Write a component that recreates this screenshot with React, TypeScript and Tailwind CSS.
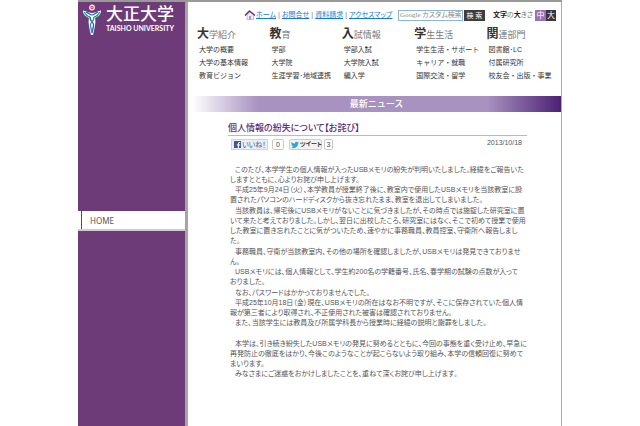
import React from 'react';

interface MenuColumn {
    initial: string;
    rest: string;
    links: string[];
}

interface Line {
    text: string;
    indent?: boolean;
}

const menu: MenuColumn[] = [
    { initial: '大', rest: '学紹介', links: ['大学の概要', '大学の基本情報', '教育ビジョン'] },
    { initial: '教', rest: '育', links: ['学部', '大学院', '生涯学習･地域連携'] },
    { initial: '入', rest: '試情報', links: ['学部入試', '大学院入試', '編入学'] },
    { initial: '学', rest: '生生活', links: ['学生生活・サポート', 'キャリア・就職', '国際交流・留学'] },
    { initial: '関', rest: '連部門', links: ['図書館･LC', '付属研究所', '校友会・出版・事業'] },
];

const utilityLinks = ['ホーム', 'お問合せ', '資料請求', 'アクセスマップ'];

const article: Line[][] = [
    [
        { text: 'このたび、本学学生の個人情報が入ったUSBメモリの紛失が判明いたしました。経緯をご報告いた', indent: true },
        { text: 'しますとともに、心よりお詫び申し上げます。' },
        { text: '平成25年9月24日（火）、本学教員が授業終了後に、教室内で使用したUSBメモリを当該教室に設', indent: true },
        { text: '置されたパソコンのハードディスクから抜き忘れたまま、教室を退出してしまいました。' },
    ],
    [
        { text: '当該教員は、帰宅後にUSBメモリがないことに気づきましたが、その時点では施錠した研究室に置', indent: true },
        { text: 'いて来たと考えておりました。しかし、翌日に出校したころ、研究室にはなく、そこで初めて授業で使用' },
        { text: 'した教室に置き忘れたことに気がついたため、速やかに事務職員、教員控室、守衛所へ報告しまし' },
        { text: 'た。' },
    ],
    [
        { text: '事務職員、守衛が当該教室内、その他の場所を確認しましたが、USBメモリは発見できておりませ', indent: true },
        { text: 'ん。' },
        { text: 'USBメモリには、個人情報として、学生約200名の学籍番号、氏名、春学期の試験の点数が入って', indent: true },
        { text: 'おりました。' },
    ],
    [
        { text: 'なお、パスワードはかかっておりませんでした。', indent: true },
        { text: '平成25年10月18日（金）現在、USBメモリの所在はなお不明ですが、そこに保存されていた個人情', indent: true },
        { text: '報が第三者により取得され、不正使用された被害は確認されておりません。' },
        { text: 'また、当該学生には教員及び所属学科長から授業時に経緯の説明と謝罪をしました。', indent: true },
    ],
    [
        { text: '本学は、引き続き紛失したUSBメモリの発見に努めるとともに、今回の事態を重く受け止め、早急に', indent: true },
        { text: '再発防止の徹底をはかり、今後このようなことが起こらないよう取り組み、本学の信頼回復に努めて' },
        { text: 'まいります。' },
        { text: 'みなさまにご迷惑をおかけしましたことを、重ねて深くお詫び申し上げます。', indent: true },
    ],
];

const Emblem = () => (
    <svg className="w-5 h-8 shrink-0" viewBox="0 0 20 32" fill="none" aria-hidden="true">
        <path d="M1 6.500C4 6.500 6 9 10 9S16 6.500 19 6.500C19 11 15.500 13 13 14C14 18 13 23 11 31H9C7 23 6 18 7 14C4.500 13 1 11 1 6.500Z" fill="#fff" />
        <circle cx="10" cy="3.500" r="2.300" fill="#e0324b" stroke="#fff" strokeWidth="1.200" />
        <circle cx="10" cy="3.500" r=".7" fill="#fff" />
        <path d="M2.500 8C3.500 11 6 12.500 8 12.800M17.500 8C16.500 11 14 12.500 12 12.800" stroke="#169a78" strokeWidth="1.200" />
        <path d="M4 8.200C7 8.800 7.500 11 10 11S13 8.800 16 8.200" stroke="#2265b8" strokeWidth="1.200" />
        <path d="M8.500 13C6.500 17 13 18 11.500 22L10 29" stroke="#2265b8" strokeWidth="1.300" />
        <path d="M11.500 13C13.500 17 7 18 8.500 22L10 29" stroke="#2596bd" strokeWidth="1.300" />
    </svg>
);

const Sidebar = () => (
    <aside className="w-[110px] shrink-0 bg-[#6d3c78] border-r-3 border-[#a6a6a6]">
        <a href="#" className="flex items-start gap-1 pl-1 pt-0.5 text-white">
            <Emblem />
            <span className="flex flex-col pt-0.5">
                <span className="text-[17px] leading-[18px] font-medium whitespace-nowrap">大正大学</span>
                <span className="font-['Lato'] text-[7px] leading-[8px] font-bold whitespace-nowrap">TAISHO UNIVERSITY</span>
            </span>
        </a>
        <nav className="mt-[175px] flex h-5 border-b-2 border-[#cfcbd1] bg-white">
            <span className="ml-[3px] w-px bg-[#6d3c78]" />
            <a href="#" className="pl-2 font-['Noto_Sans'] text-[8px] leading-[19px] text-[#555]">HOME</a>
        </nav>
    </aside>
);

const UtilityBar = () => (
    <div className="flex items-center justify-between pl-14 pr-[5px]">
        <div className="flex items-center text-[7px] leading-3 whitespace-nowrap [font-feature-settings:'palt']">
            <svg className="w-3 h-3 shrink-0" viewBox="0 0 12 12" aria-hidden="true">
                <path d="M3 5.500V10.500H9.500V5.500L6 2.500Z" fill="#eee9f2" stroke="#a99bb4" strokeWidth=".6" />
                <path d="M1 6.500L5.500 2L11 6.500" fill="none" stroke="#5d3a78" strokeWidth="1.600" />
                <path d="M5 7H7V10.500H5Z" fill="#b39ac2" />
            </svg>
            {utilityLinks.map((label, i) => (
                <React.Fragment key={label}>
                    {i > 0 && <span className="px-0.5 text-[#777]">|</span>}
                    <a href="#" className="text-[#1a78d0] underline">{label}</a>
                </React.Fragment>
            ))}
        </div>
        <div className="flex items-center">
            <form className="flex h-[11px]">
                <input
                    type="text"
                    aria-label="カスタム検索"
                    placeholder="Google カスタム検索"
                    className="w-[65px] border border-[#8fb6cf] px-px font-['Liberation_Serif','Noto_Sans_CJK_JP',serif] text-[7px] leading-[9px] text-[#555] placeholder:text-[#888] [font-feature-settings:'palt']"
                />
                <button type="button" className="ml-px w-[21px] bg-[#3d3d3d] text-[7px] leading-[11px] text-white">検 索</button>
            </form>
            <span className="ml-2 text-[7px] leading-3 font-bold whitespace-nowrap text-[#222] [font-feature-settings:'palt']">
                文字<span className="font-normal text-[#777]">の</span>大<span className="font-normal text-[#777]">きさ</span>
            </span>
            <button type="button" className="ml-0.5 w-[11px] h-[11px] bg-[#9a70b5] text-[8px] leading-[11px] text-white">中</button>
            <button type="button" className="w-[10px] h-[11px] bg-[#3a3340] text-[8px] leading-[11px] text-white">大</button>
        </div>
    </div>
);

const MainMenu = () => (
    <nav className="mt-1.5 grid grid-cols-5 pl-[9px] pr-0.5">
        {menu.map(col => (
            <div key={col.initial + col.rest} className="min-w-0 whitespace-nowrap">
                <h2 className="text-[9px] leading-[15px] text-[#777]">
                    <span className="text-[12px] font-bold text-[#333]">{col.initial}</span>{col.rest}
                </h2>
                <ul className="pl-0.5 text-[7px] leading-[13px] text-[#333]">
                    {col.links.map(link => (
                        <li key={link}><a href="#">{link}</a></li>
                    ))}
                </ul>
            </div>
        ))}
    </nav>
);

const SocialBar = () => (
    <div className="flex h-[11px] items-stretch text-[7px] leading-[9px] whitespace-nowrap text-[#444]">
        <button type="button" className="flex w-[37px] items-center gap-px border border-[#cad4e7] bg-[#eceef5] px-0.5 text-[#3b5998] [font-feature-settings:'palt']">
            <svg className="w-[7px] h-[7px] shrink-0" viewBox="0 0 8 8" aria-hidden="true">
                <rect width="8" height="8" fill="#3b5998" />
                <path d="M5 8V4.500M3.200 4.500H7M5 5V3Q5 1.500 7 1.700" fill="none" stroke="#fff" strokeWidth="1.200" />
            </svg>
            いいね！
        </button>
        <span className="ml-1 w-3 rounded-xs border border-[#c8c8c8] text-center">0</span>
        <button type="button" className="ml-[5px] flex w-[33px] items-center gap-px rounded-xs border border-[#ccc] bg-[#f3f3f3] px-px text-[6px] font-bold text-[#333] [font-feature-settings:'palt']">
            <svg className="w-2 h-2 shrink-0" viewBox="0 0 24 24" fill="#2aa6e0" aria-hidden="true">
                <path d="M24 4.600a10 10 0 0 1-2.800.8 5 5 0 0 0 2.200-2.700 10 10 0 0 1-3.100 1.200 4.900 4.900 0 0 0-8.400 4.500A14 14 0 0 1 1.700 3.200a4.900 4.900 0 0 0 1.500 6.500 5 5 0 0 1-2.200-.6 4.900 4.900 0 0 0 3.900 4.900 5 5 0 0 1-2.200.1 4.900 4.900 0 0 0 4.600 3.400A10 10 0 0 1 0 19.500 14 14 0 0 0 21.500 7.100 10 10 0 0 0 24 4.600z" />
            </svg>
            ツイート
        </button>
        <span className="ml-0.5 w-[9px] rounded-xs border border-[#c8c8c8] text-center">3</span>
    </div>
);

const Article = () => (
    <article className="mt-[9px] pl-10 pr-[34px]">
        <h1 className="border-b border-[#bbb] text-[9px] leading-[14px] font-medium text-[#5b2a6c] [font-feature-settings:'palt']">
            個人情報の紛失について【お詫び】
        </h1>
        <div className="mt-[3px] flex items-start justify-between pl-[3px] pr-[5px]">
            <SocialBar />
            <time className="font-['Liberation_Sans'] text-[7px] leading-[8px] text-[#555]">2013/10/18</time>
        </div>
        <div className="mt-[15px] flex flex-col gap-px pl-0.5 text-[7px] leading-[10px] whitespace-nowrap text-[#555] [font-feature-settings:'palt']">
            {article.map((group, i) => (
                <div key={i} className="last:mt-[10px]">
                    {group.map(line => (
                        <p key={line.text} className={line.indent ? 'pl-[5px]' : ''}>{line.text}</p>
                    ))}
                </div>
            ))}
        </div>
    </article>
);

export default function App() {
    return (
        <div lang="ja" className="min-h-screen bg-white font-['Liberation_Sans','Noto_Sans_CJK_JP',sans-serif]">
            <div className="mx-auto flex min-h-screen w-full max-w-[484px] border-t-2 border-[#999]">
                <Sidebar />
                <main className="min-w-0 flex-1 border-r border-[#aaa] pt-[7px]">
                    <UtilityBar />
                    <MainMenu />
                    <div className="mt-[14px] ml-1 bg-linear-to-r from-white via-[#a892c0] via-18% to-[#a892c0]">
                        <h2 className="bg-linear-to-r from-transparent from-80% to-[#4c2175] text-center text-[9px] leading-4 font-medium text-white">
                            最新ニュース
                        </h2>
                    </div>
                    <Article />
                </main>
            </div>
        </div>
    );
}
